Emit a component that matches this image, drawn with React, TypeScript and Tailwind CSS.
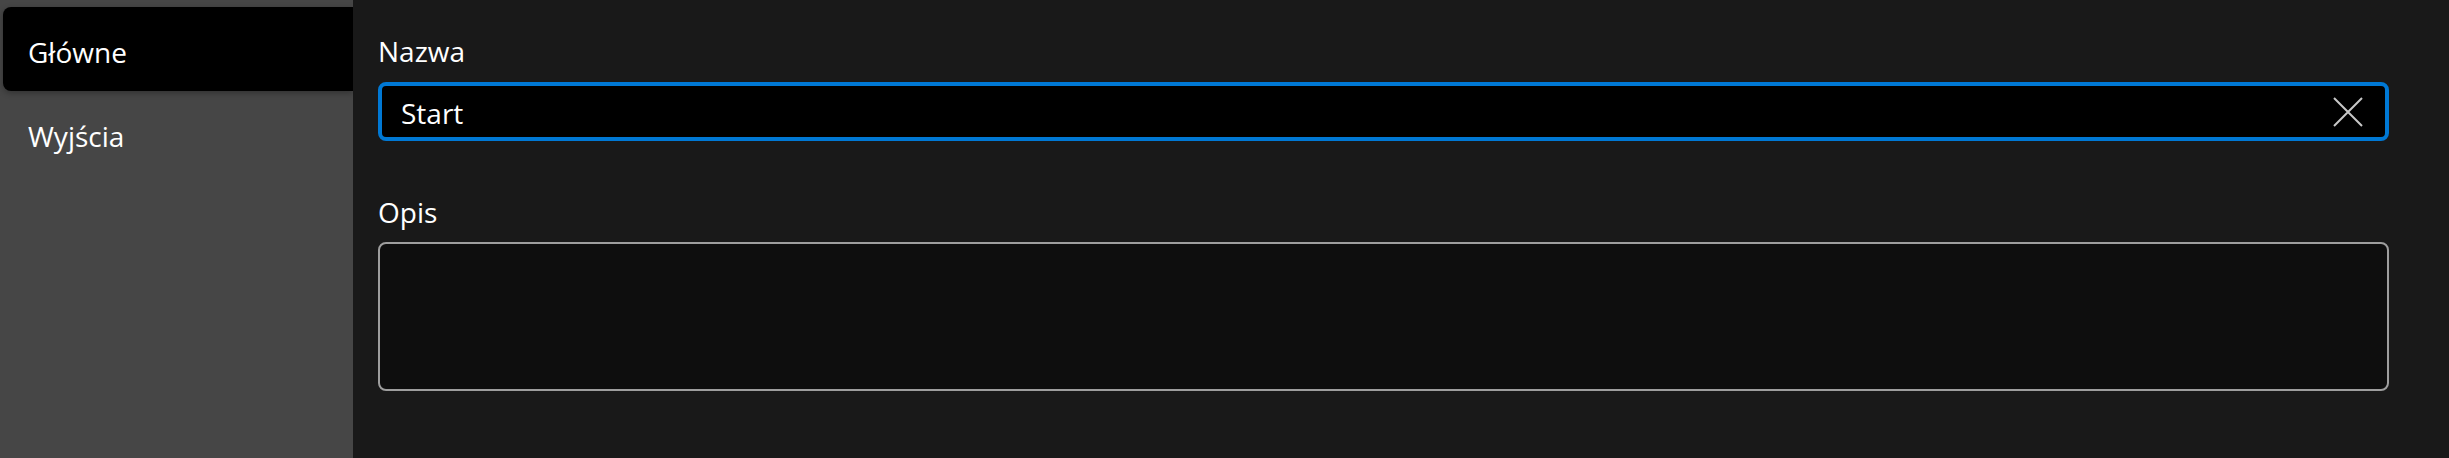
import { useState } from "react";

const font = { fontFamily: '"Open Sans", "Noto Sans", sans-serif' };

function NavItem({ label, active, onClick }: any) {
  return (
    <button
      onClick={onClick}
      className={
        active
          ? "h-[84px] w-full flex items-center pl-[25px] pt-[5px] rounded-l-[8px] bg-black text-white text-[28px] shadow-[0_2px_6px_rgba(0,0,0,0.3)] text-left"
          : "h-[84px] w-full flex items-center pl-[25px] pt-[5px] rounded-l-[8px] text-white text-[28px] text-left"
      }
    >
      {label}
    </button>
  );
}

export default function App() {
  const [tab, setTab] = useState("main");
  const [name, setName] = useState("Start");
  const [desc, setDesc] = useState("");

  return (
    <div className="flex h-[458px] w-full overflow-hidden" style={font}>
      <nav className="w-[353px] shrink-0 bg-[#464646] pt-[7px] pl-[3px] flex flex-col">
        <NavItem label="Główne" active={tab === "main"} onClick={() => setTab("main")} />
        <NavItem label="Wyjścia" active={tab === "out"} onClick={() => setTab("out")} />
      </nav>

      <main className="flex-1 bg-[#191919] pl-[25px] pr-[60px] pt-[32px] text-white">
        <label className="block text-[28px] leading-[38px] mb-[12px]">Nazwa</label>
        <div className="h-[59px] flex items-center border-4 border-[#0078d4] rounded-[8px] bg-black pl-[19px] pr-[22px]">
          <input
            value={name}
            onChange={(e) => setName(e.target.value)}
            className="flex-1 bg-transparent outline-none text-[28px] text-white pt-[3px]"
          />
          <button onClick={() => setName("")} className="w-[30px] h-[30px] flex items-center justify-center">
            <svg width="30" height="30" viewBox="0 0 30 30">
              <path d="M1 1 L29 29 M29 1 L1 29" stroke="#c8c8c8" strokeWidth="2" fill="none" />
            </svg>
          </button>
        </div>

        <label className="block text-[28px] leading-[38px] mt-[52px] mb-[11px]">Opis</label>
        <textarea
          value={desc}
          onChange={(e) => setDesc(e.target.value)}
          className="block w-full h-[149px] resize-none border-2 border-[#9e9e9e] rounded-[8px] bg-[#0e0e0e] outline-none text-[28px] text-white px-[19px] py-[8px]"
        />
      </main>
    </div>
  );
}
